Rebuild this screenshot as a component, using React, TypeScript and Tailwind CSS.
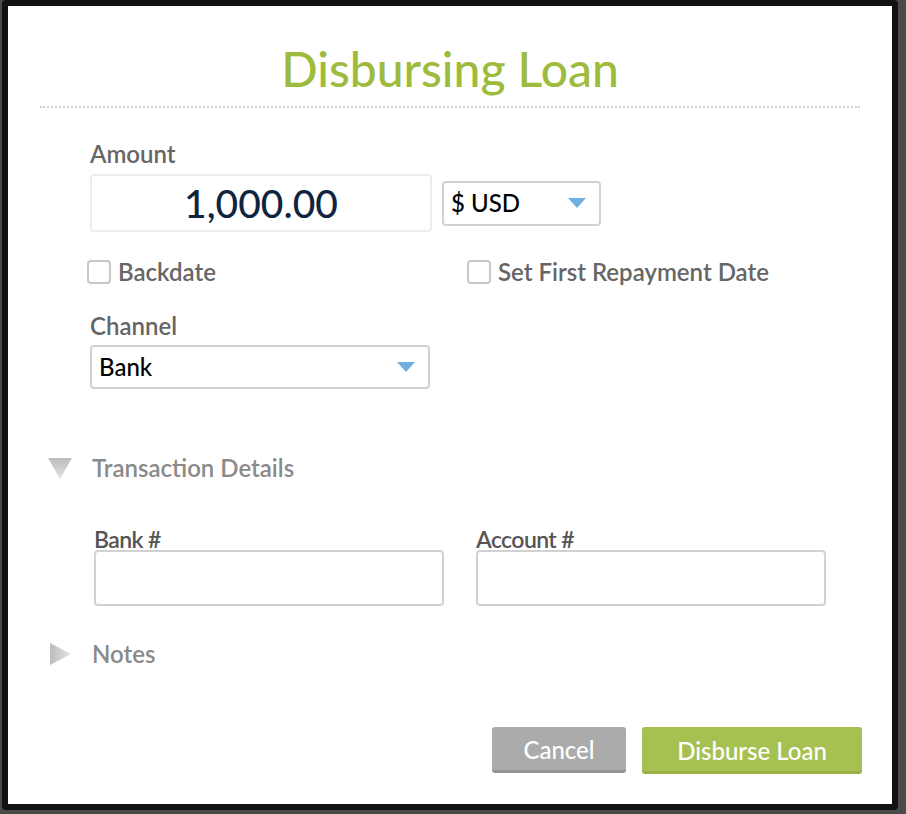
export default function App() {
  const font = { fontFamily: "Lato, 'Open Sans', sans-serif" };
  return (
    <div className="h-[814px] w-[906px] bg-[#4a4a4a] pb-[4px] pl-[2px] pr-[8px]" style={font}>
      <div className="flex h-full flex-col rounded-[4px] border-[6px] border-[#111] bg-white">
        <h1 className="pt-[35px] text-center text-[48px] leading-[56px] font-medium text-[#9dbb3c]">
          Disbursing Loan
        </h1>
        <div className="mx-8 mt-[9px] border-t-2 border-dotted border-[#d0d0d0]" />

        <div className="flex flex-col pl-[82px] pr-[32px]">
          <label className="mt-[33px] text-[24px] leading-[26px] font-semibold text-[#666]">Amount</label>
          <div className="mt-[7px] flex items-center gap-[10px]">
            <div className="flex h-[58px] w-[342px] items-center justify-center rounded-[4px] border-2 border-[#ececec] text-[39px] font-medium text-[#102440]">
              1,000.00
            </div>
            <Select value="$ USD" width="w-[159px]" height="h-[45px]" />
          </div>

          <div className="mt-[26px] flex h-[28px] items-center">
            <Check label="Backdate" className="-ml-[3px] w-[380px]" />
            <Check label="Set First Repayment Date" />
          </div>

          <label className="mt-[27px] text-[24px] leading-[26px] font-semibold text-[#666]">Channel</label>
          <div className="mt-[6px]">
            <Select value="Bank" width="w-[340px]" height="h-[44px]" />
          </div>
        </div>

        <Section id="tx" title="Transaction Details" open className="mt-[65px]" />

        <div className="mt-[46px] flex gap-[32px] pl-[86px]">
          <Field label="Bank #" />
          <Field label="Account #" />
        </div>

        <Section id="notes" title="Notes" className="mt-[34px]" />

        <div className="mt-[59px] flex justify-end gap-[16px] pr-[30px]">
          <button className="h-[46px] w-[134px] rounded-[3px] border-b-[3px] border-[#949494] bg-[#ababab] pt-[2px] text-[24px] leading-none font-medium text-white">
            Cancel
          </button>
          <button className="h-[47px] w-[220px] rounded-[3px] border-b-[3px] border-[#97b146] bg-[#a6c152] pt-[3px] text-[24px] leading-none font-medium text-white">
            Disburse Loan
          </button>
        </div>
      </div>
    </div>
  );
}

function Select({ value, width, height }: { value: string; width: string; height: string }) {
  return (
    <div
      className={`flex ${width} ${height} items-center justify-between rounded-[4px] border-2 border-[#d2d2d2] pl-[7px] pr-[13px] text-[24px] leading-none font-medium text-black`}
    >
      <span>{value}</span>
      <svg width="18" height="10" viewBox="0 0 18 10">
        <path d="M0 0 L18 0 L9 10 Z" fill="#6eb1e0" />
      </svg>
    </div>
  );
}

function Check({ label, className = "" }: { label: string; className?: string }) {
  return (
    <div className={`flex items-center gap-[7px] ${className}`}>
      <span className="h-[24px] w-[24px] rounded-[4px] border-2 border-[#c8c8c8]" />
      <span className="text-[24px] leading-[28px] font-semibold text-[#666]">{label}</span>
    </div>
  );
}

function Section({ id, title, open = false, className = "" }: { id: string; title: string; open?: boolean; className?: string }) {
  return (
    <div className={`flex h-[28px] items-center gap-[20px] pl-[40px] ${className}`}>
      <svg width="24" height="24" viewBox="0 0 24 24">
        <defs>
          <linearGradient id={`grad-${id}`} x1="0" y1="0" x2={open ? "0" : "1"} y2={open ? "1" : "0"}>
            <stop offset="0" stopColor="#bdbdbd" />
            <stop offset="1" stopColor="#e2e2e2" />
          </linearGradient>
        </defs>
        {open ? (
          <path d="M0 2 L24 2 L12 23 Z" fill={`url(#grad-${id})`} />
        ) : (
          <path d="M2 1 L23 12 L2 23 Z" fill={`url(#grad-${id})`} />
        )}
      </svg>
      <span className="text-[24px] leading-[28px] font-semibold text-[#8a8a8a]">{title}</span>
    </div>
  );
}

function Field({ label }: { label: string }) {
  return (
    <div className="flex flex-col">
      <span className="text-[23px] leading-[22px] font-semibold tracking-[-0.6px] text-[#555]">{label}</span>
      <div className="h-[56px] w-[350px] rounded-[4px] border-2 border-[#d2d2d2]" />
    </div>
  );
}
